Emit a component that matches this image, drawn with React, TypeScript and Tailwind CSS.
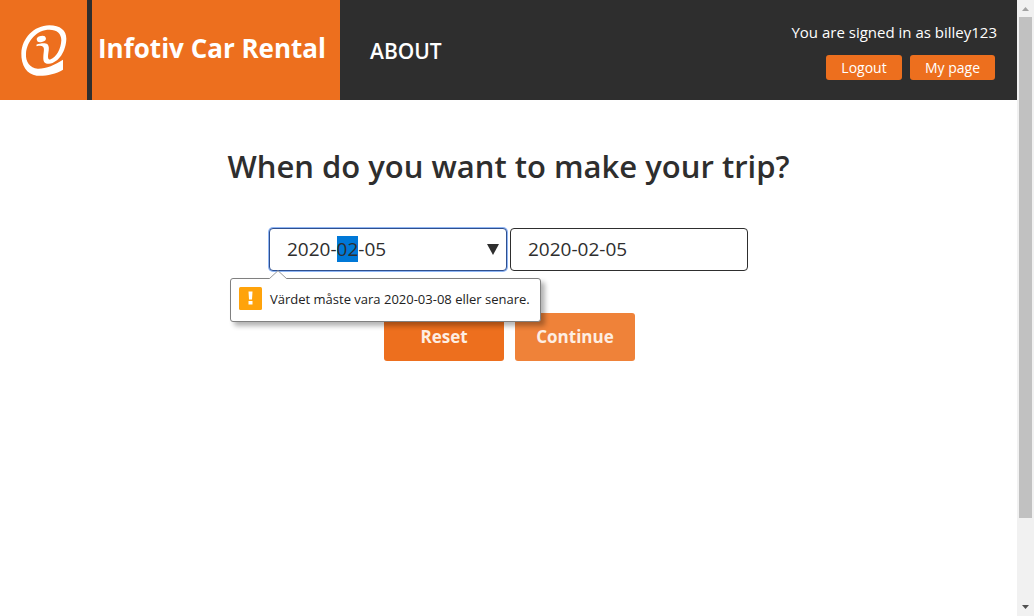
import { useEffect, useRef } from "react";

function Logo() {
  return (
    <svg viewBox="0 0 261 300" className="h-full w-full" role="img" aria-label="Infotiv logo">
      <path
        fill="#fff"
        fillRule="evenodd"
        d="M189 179 L189 209 C166 223 135 229 110 227 C80 224 63 195 64 160 C66 115 101 77 148 76 C181 76 199 92 199 116 C198 152 177 188 147 191 C133 192 129 184 130 170 C131 155 134 145 129 140 C125 137 118 137 110 139 L109 134 C121 129 136 128 142 132 C148 138 147 147 145 159 C143 173 144 181 152 178 C168 172 183 148 184 121 C184 101 171 89 148 89 C112 89 81 121 78 160 C76 186 90 205 113 206 C136 207 165 195 189 179 Z"
      />
      <ellipse cx="124" cy="117" rx="14" ry="9" fill="#fff" transform="rotate(-12 124 117)" />
    </svg>
  );
}

function MessageBubble() {
  return (
    <div
      role="alert"
      className="absolute top-[50px] -left-[39px] z-10 flex h-[44px] items-center gap-2 rounded-[3px] border border-[#808080] bg-white pr-[10px] pl-2 whitespace-nowrap shadow-[4px_4px_5px_rgba(0,0,0,0.3)]"
    >
      <svg viewBox="0 0 18 9" className="absolute -top-[9px] left-[38px] h-[9px] w-[18px]">
        <path d="M0 9 L9 0.7 L18 9" fill="#fff" stroke="#999" />
      </svg>
      <svg viewBox="0 0 23 23" className="-mt-1 size-[23px]">
        <rect width="23" height="23" rx="1.5" fill="#ffa30b" />
        <path d="M9.500 4.500 h4 l-0.500 8 h-3 z M9.500 14 h4 v3.500 h-4 z" fill="#fff" />
      </svg>
      <span className="font-['Open_Sans','Noto_Sans',sans-serif] text-[13px] text-[#222]">
        Värdet måste vara 2020-03-08 eller senare.
      </span>
    </div>
  );
}

function Scrollbar() {
  return (
    <div className="flex w-[17px] shrink-0 flex-col items-center bg-[#f1f1f1]" aria-hidden="true">
      <svg viewBox="0 0 17 17" className="size-[17px]">
        <path d="M5 11 L8.500 7 L12 11 Z" fill="#a3a3a3" />
      </svg>
      <div className="w-[13px] grow-[501] bg-[#c1c1c1]" />
      <div className="grow-[81]" />
      <svg viewBox="0 0 17 17" className="size-[17px]">
        <path d="M5 6 L12 6 L8.500 10 Z" fill="#505050" />
      </svg>
    </div>
  );
}

const dateField =
  "h-[43px] w-[238px] rounded-[4px] border bg-white px-[17px] pb-[1px] text-[19px] text-[#2e2e2e] outline-none";

export default function App() {
  const start = useRef<HTMLInputElement>(null);

  useEffect(() => {
    start.current?.focus();
    start.current?.setSelectionRange(5, 7);
  }, []);

  return (
    <div className="flex min-h-screen bg-white font-['Open_Sans','Noto_Sans',sans-serif] text-[#2e2e2e]">
      <div className="min-w-0 flex-1">
        <header className="flex h-[100px] bg-[#2e2e2e] text-white">
          <a href="#home" className="block w-[87px] bg-[#ed6f1e]">
            <Logo />
          </a>
          <div className="ml-[5px] flex w-[248px] items-center bg-[#ed6f1e] pb-[3px] pl-[6px]">
            <h1 className="text-[26px] font-bold whitespace-nowrap">Infotiv Car Rental</h1>
          </div>
          <nav className="flex items-center pt-1 pl-[30px]">
            <a href="#about" className="text-[21px] font-semibold">ABOUT</a>
          </nav>
          <div className="ml-auto flex flex-col items-end pt-[22px] pr-5">
            <p className="text-[15px] leading-5 font-medium">You are signed in as billey123</p>
            <div className="mt-[13px] mr-[2px] flex gap-2">
              <button type="button" className="h-[25px] w-[76px] rounded-[3px] bg-[#ed6f1e] text-[14px] font-medium">
                Logout
              </button>
              <button type="button" className="h-[25px] w-[85px] rounded-[3px] bg-[#ed6f1e] text-[14px] font-medium">
                My page
              </button>
            </div>
          </div>
        </header>

        <main className="flex flex-col items-center pt-[44px]">
          <h2 className="text-[31px] leading-[44px] font-semibold">When do you want to make your trip?</h2>
          <form className="mt-10 flex flex-col items-center" onSubmit={(e) => e.preventDefault()}>
            <div className="flex gap-[3px]">
              <div className="relative">
                <input
                  ref={start}
                  type="text"
                  aria-label="Start date"
                  defaultValue="2020-02-05"
                  className={`${dateField} block border-[#2f4f8f] shadow-[0_0_0_1px_#8fb6f5] selection:bg-[#0078d7] selection:text-[#2e2e2e]`}
                />
                <svg viewBox="0 0 12 11" className="pointer-events-none absolute top-4 right-2 h-[11px] w-3">
                  <path d="M0 0 H12 L6 11 Z" fill="#2e2e2e" />
                </svg>
                <MessageBubble />
              </div>
              <input
                type="text"
                aria-label="End date"
                defaultValue="2020-02-05"
                className={`${dateField} border-[#2e2e2e]`}
              />
            </div>
            <div className="mt-[42px] flex gap-[11px] pl-[2px]">
              <button type="reset" className="h-12 w-[120px] rounded-[3px] bg-[#ed6f1e] text-[17px] font-bold text-[#fdeee3]">
                Reset
              </button>
              <button type="submit" className="h-12 w-[120px] rounded-[3px] bg-[#ef8239] text-[17px] font-bold text-[#fdeee3]">
                Continue
              </button>
            </div>
          </form>
        </main>
      </div>
      <Scrollbar />
    </div>
  );
}
